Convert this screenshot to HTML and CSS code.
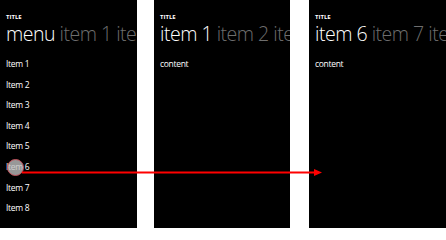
FILE: index.html
```html
<!DOCTYPE html>
<html>
<head>
<meta charset="utf-8">
<link rel="stylesheet" href="styles.css">
</head>
<body>
<div class="stage">
  <section class="panel p1">
    <div class="title">TITLE</div>
    <div class="pivot"><span class="cur">menu</span> <span class="next">item 1 item 2</span></div>
    <ul class="list">
      <li>Item 1</li>
      <li>Item 2</li>
      <li>Item 3</li>
      <li>Item 4</li>
      <li>Item 5</li>
      <li>Item 6</li>
      <li>Item 7</li>
      <li>Item 8</li>
    </ul>
  </section>
  <section class="panel p2">
    <div class="title">TITLE</div>
    <div class="pivot"><span class="cur">item 1</span> <span class="next">item 2 item 3</span></div>
    <div class="content">content</div>
  </section>
  <section class="panel p3">
    <div class="title">TITLE</div>
    <div class="pivot"><span class="cur">item 6</span> <span class="next">item 7 item 8</span></div>
    <div class="content">content</div>
  </section>
  <div class="touch"></div>
  <svg class="arrow" width="446" height="228" viewBox="0 0 446 228">
    <line x1="22" y1="172.5" x2="316" y2="172.5" stroke="#ff0000" stroke-width="2"/>
    <polygon points="314,169 322,172.5 314,176" fill="#ff0000"/>
  </svg>
</div>
</body>
</html>
```
FILE: styles.css
```css
html, body {
  margin: 0;
  padding: 0;
  background: #ffffff;
}
.stage {
  position: relative;
  width: 446px;
  height: 228px;
  display: flex;
  overflow: hidden;
}
.panel {
  background: #000000;
  color: #ffffff;
  height: 228px;
  overflow: hidden;
  padding-left: 6px;
  box-sizing: border-box;
  font-family: "Open Sans", "Noto Sans", sans-serif;
  white-space: nowrap;
}
.p1 { width: 137px; margin-right: 17px; }
.p2 { width: 136px; margin-right: 19px; }
.p3 { width: 137px; }
.title {
  font-size: 6px;
  font-weight: 700;
  margin-top: 14px;
  line-height: 7px;
}
.pivot {
  font-size: 19.5px;
  font-weight: 300;
  line-height: 24px;
  margin-top: 1px;
  letter-spacing: -0.5px;
}
.pivot .next { color: #6e6e6e; }
.list {
  list-style: none;
  margin: 11px 0 0 0;
  padding: 0;
  font-size: 8.5px;
  letter-spacing: -0.3px;
}
.list li {
  height: 20.6px;
  line-height: 14px;
}
.content {
  font-size: 8.5px;
  letter-spacing: -0.3px;
  margin-top: 11px;
  line-height: 14px;
}
.touch {
  position: absolute;
  left: 7px;
  top: 159px;
  width: 15px;
  height: 15px;
  border-radius: 50%;
  background: rgba(190, 190, 190, 0.8);
  border: 1px solid #c0505a;
}
.arrow {
  position: absolute;
  left: 0;
  top: 0;
}
```
